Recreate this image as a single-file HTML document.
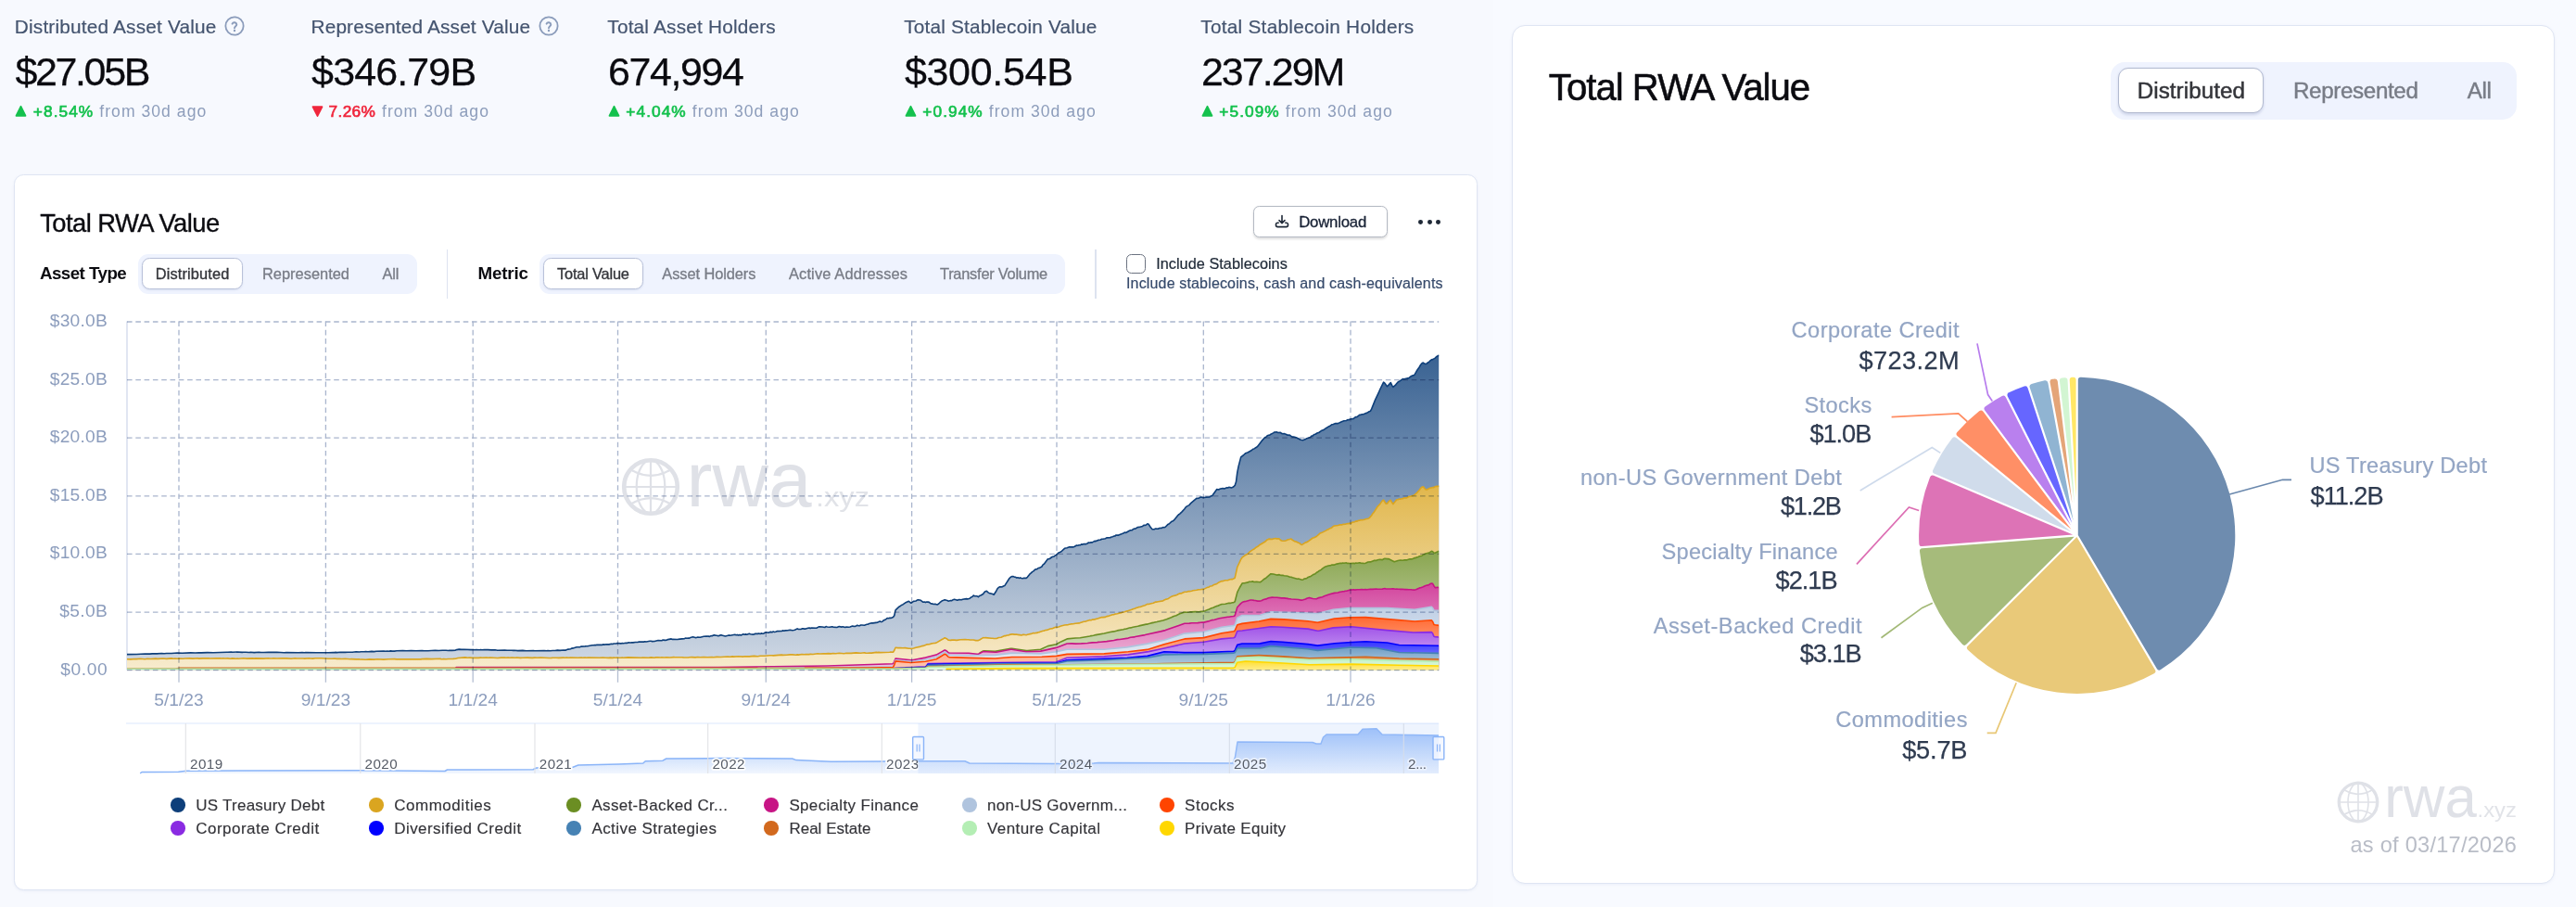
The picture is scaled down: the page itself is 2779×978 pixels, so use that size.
<!DOCTYPE html>
<html lang="en"><head><meta charset="utf-8"><title>RWA.xyz – Total RWA Value</title>
<style>
html,body{margin:0;padding:0}
body{width:2779px;height:978px;overflow:hidden;position:relative;background:#f8faff;font-family:"Liberation Sans",sans-serif}
.lbg{position:absolute;left:0;top:0;width:1611px;height:978px;background:#f7f9fe}
.t{position:absolute;white-space:nowrap;line-height:1;margin:0}
.b{position:absolute;display:block}
svg{overflow:visible}
</style></head><body>
<div class="lbg"></div>
<header aria-label="Key metrics" style="position:absolute;left:0;top:0;width:0;height:0">
<div class="t" style="left:15.80px;top:19.29px;font-size:20.8px;color:#44546f;letter-spacing:0.181px;-webkit-text-stroke:0.2px #44546f;">Distributed Asset Value</div>
<svg class="b" style="left:240.9px;top:16.2px" width="24" height="24" viewBox="0 0 24 24"><circle cx="12" cy="12" r="9.65" fill="none" stroke="#8b9cbb" stroke-width="1.8"/><path d="M9.6 9.7A2.45 2.45 0 0 1 14.3 10.5c0 1.6-2.3 1.9-2.3 3.8" fill="none" stroke="#8b9cbb" stroke-width="1.95" stroke-linecap="round"/><circle cx="12" cy="17.0" r="1.2" fill="#8b9cbb"/></svg>
<div class="t" style="left:16.40px;top:55.60px;font-size:43.0px;color:#0b0b10;letter-spacing:-2.368px;-webkit-text-stroke:0.25px #0b0b10;">$27.05B</div>
<svg class="b" style="left:16.4px;top:113.0px" width="13" height="14" viewBox="0 0 13 14"><path d="M6.5 1.6 L11.6 11.9 H1.4 Z" fill="#14c14d" stroke="#14c14d" stroke-width="1.6" stroke-linejoin="round"/></svg>
<div class="t" style="left:35.80px;top:111.96px;font-size:17.3px;color:#14c14d;letter-spacing:1.069px;-webkit-text-stroke:0.65px #14c14d;">+8.54%</div>
<div class="t" style="left:107.30px;top:111.70px;font-size:17.6px;color:#8d9dbb;letter-spacing:1.026px;">from 30d ago</div>
<div class="t" style="left:335.50px;top:19.29px;font-size:20.8px;color:#44546f;letter-spacing:0.150px;-webkit-text-stroke:0.2px #44546f;">Represented Asset Value</div>
<svg class="b" style="left:579.5px;top:16.2px" width="24" height="24" viewBox="0 0 24 24"><circle cx="12" cy="12" r="9.65" fill="none" stroke="#8b9cbb" stroke-width="1.8"/><path d="M9.6 9.7A2.45 2.45 0 0 1 14.3 10.5c0 1.6-2.3 1.9-2.3 3.8" fill="none" stroke="#8b9cbb" stroke-width="1.95" stroke-linecap="round"/><circle cx="12" cy="17.0" r="1.2" fill="#8b9cbb"/></svg>
<div class="t" style="left:336.10px;top:55.60px;font-size:43.0px;color:#0b0b10;letter-spacing:-0.874px;-webkit-text-stroke:0.25px #0b0b10;">$346.79B</div>
<svg class="b" style="left:336.1px;top:113.0px" width="13" height="14" viewBox="0 0 13 14"><path d="M6.5 12.2 L11.6 2.1 H1.4 Z" fill="#f0263c" stroke="#f0263c" stroke-width="1.6" stroke-linejoin="round"/></svg>
<div class="t" style="left:354.50px;top:111.96px;font-size:17.3px;color:#f0263c;letter-spacing:0.362px;-webkit-text-stroke:0.65px #f0263c;">7.26%</div>
<div class="t" style="left:412.00px;top:111.70px;font-size:17.6px;color:#8d9dbb;letter-spacing:1.026px;">from 30d ago</div>
<div class="t" style="left:655.30px;top:19.29px;font-size:20.8px;color:#44546f;letter-spacing:0.192px;-webkit-text-stroke:0.2px #44546f;">Total Asset Holders</div>
<div class="t" style="left:655.90px;top:55.60px;font-size:43.0px;color:#0b0b10;letter-spacing:-1.406px;-webkit-text-stroke:0.25px #0b0b10;">674,994</div>
<svg class="b" style="left:655.9px;top:113.0px" width="13" height="14" viewBox="0 0 13 14"><path d="M6.5 1.6 L11.6 11.9 H1.4 Z" fill="#14c14d" stroke="#14c14d" stroke-width="1.6" stroke-linejoin="round"/></svg>
<div class="t" style="left:675.30px;top:111.96px;font-size:17.3px;color:#14c14d;letter-spacing:1.069px;-webkit-text-stroke:0.65px #14c14d;">+4.04%</div>
<div class="t" style="left:746.80px;top:111.70px;font-size:17.6px;color:#8d9dbb;letter-spacing:1.026px;">from 30d ago</div>
<div class="t" style="left:975.30px;top:19.29px;font-size:20.8px;color:#44546f;letter-spacing:0.177px;-webkit-text-stroke:0.2px #44546f;">Total Stablecoin Value</div>
<div class="t" style="left:975.90px;top:55.60px;font-size:43.0px;color:#0b0b10;letter-spacing:-0.303px;-webkit-text-stroke:0.25px #0b0b10;">$300.54B</div>
<svg class="b" style="left:975.9px;top:113.0px" width="13" height="14" viewBox="0 0 13 14"><path d="M6.5 1.6 L11.6 11.9 H1.4 Z" fill="#14c14d" stroke="#14c14d" stroke-width="1.6" stroke-linejoin="round"/></svg>
<div class="t" style="left:995.30px;top:111.96px;font-size:17.3px;color:#14c14d;letter-spacing:1.069px;-webkit-text-stroke:0.65px #14c14d;">+0.94%</div>
<div class="t" style="left:1066.80px;top:111.70px;font-size:17.6px;color:#8d9dbb;letter-spacing:1.026px;">from 30d ago</div>
<div class="t" style="left:1295.30px;top:19.29px;font-size:20.8px;color:#44546f;letter-spacing:0.248px;-webkit-text-stroke:0.2px #44546f;">Total Stablecoin Holders</div>
<div class="t" style="left:1295.90px;top:55.60px;font-size:43.0px;color:#0b0b10;letter-spacing:-1.974px;-webkit-text-stroke:0.25px #0b0b10;">237.29M</div>
<svg class="b" style="left:1295.9px;top:113.0px" width="13" height="14" viewBox="0 0 13 14"><path d="M6.5 1.6 L11.6 11.9 H1.4 Z" fill="#14c14d" stroke="#14c14d" stroke-width="1.6" stroke-linejoin="round"/></svg>
<div class="t" style="left:1315.30px;top:111.96px;font-size:17.3px;color:#14c14d;letter-spacing:1.069px;-webkit-text-stroke:0.65px #14c14d;">+5.09%</div>
<div class="t" style="left:1386.80px;top:111.70px;font-size:17.6px;color:#8d9dbb;letter-spacing:1.026px;">from 30d ago</div>
</header>
<main style="position:absolute;left:0;top:0;width:0;height:0">
<section aria-label="Total RWA Value over time" style="position:absolute;left:0;top:0;width:0;height:0">
<div class="b" style="left:15px;top:188px;width:1579px;height:771.5px;background:#fff;border:1.4px solid #dfe5f3;border-radius:10.5px;box-sizing:border-box;box-shadow:0 1px 3px rgba(120,140,190,.10)"></div>
<div class="t" style="left:43.20px;top:226.61px;font-size:27.4px;color:#0b0b10;letter-spacing:-0.575px;-webkit-text-stroke:0.35px #0b0b10;">Total RWA Value</div>
<div class="b" style="left:1352.3px;top:222px;width:144.3px;height:33.6px;background:#fff;border:1.3px solid #b4b9c3;border-radius:6.5px;box-sizing:border-box;box-shadow:0 1.5px 2.5px rgba(0,0,0,.13)"></div>
<svg class="b" style="left:1373.8px;top:230.3px" width="18" height="18" viewBox="0 0 18 18" fill="none" stroke="#1f2937" stroke-width="1.6" stroke-linecap="round" stroke-linejoin="round"><path d="M9 2.6v7.6M6 7.6l3 3 3-3"/><path d="M5.2 10.2H4.4a1.9 1.9 0 0 0-1.9 1.9v.6a1.9 1.9 0 0 0 1.9 1.9h9.2a1.9 1.9 0 0 0 1.9-1.9v-.6a1.9 1.9 0 0 0-1.9-1.9h-.8"/></svg>
<div class="t" style="left:1401.20px;top:231.98px;font-size:16.8px;color:#182235;letter-spacing:-0.217px;-webkit-text-stroke:0.3px #182235;">Download</div>
<div class="b" style="left:1530.4px;top:237.0px;width:4.9px;height:4.9px;border-radius:50%;background:#1f2937"></div>
<div class="b" style="left:1539.7px;top:237.0px;width:4.9px;height:4.9px;border-radius:50%;background:#1f2937"></div>
<div class="b" style="left:1549.0px;top:237.0px;width:4.9px;height:4.9px;border-radius:50%;background:#1f2937"></div>
<div class="t" style="left:42.90px;top:286.09px;font-size:18.8px;color:#0b0b10;letter-spacing:-0.546px;font-weight:700;">Asset Type</div>
<div class="b" style="left:149px;top:274.3px;width:300.7px;height:42.3px;background:#eff3fe;border-radius:11px"></div>
<div class="b" style="left:153px;top:278px;width:108.8px;height:34px;background:#fff;border:1.3px solid #b9c1d9;border-radius:8.5px;box-sizing:border-box;box-shadow:0 1px 2px rgba(60,80,140,.12)"></div>
<div class="t" style="left:167.70px;top:287.12px;font-size:16.4px;color:#34353a;letter-spacing:0.141px;-webkit-text-stroke:0.33px #34353a;">Distributed</div>
<div class="t" style="left:283.00px;top:287.12px;font-size:16.4px;color:#787c86;letter-spacing:0.009px;-webkit-text-stroke:0.3px #787c86;">Represented</div>
<div class="t" style="left:412.40px;top:287.12px;font-size:16.4px;color:#787c86;letter-spacing:-0.114px;-webkit-text-stroke:0.3px #787c86;">All</div>
<div class="b" style="left:481.6px;top:269px;width:1.4px;height:52.5px;background:#dde3f0"></div>
<div class="t" style="left:515.50px;top:286.09px;font-size:18.8px;color:#0b0b10;letter-spacing:-0.175px;font-weight:700;">Metric</div>
<div class="b" style="left:582px;top:274.3px;width:566.6px;height:42.3px;background:#eff3fe;border-radius:11px"></div>
<div class="b" style="left:586px;top:278px;width:107.5px;height:34px;background:#fff;border:1.3px solid #b9c1d9;border-radius:8.5px;box-sizing:border-box;box-shadow:0 1px 2px rgba(60,80,140,.12)"></div>
<div class="t" style="left:601.00px;top:287.12px;font-size:16.4px;color:#34353a;letter-spacing:-0.193px;-webkit-text-stroke:0.33px #34353a;">Total Value</div>
<div class="t" style="left:714.30px;top:287.12px;font-size:16.4px;color:#787c86;letter-spacing:-0.074px;-webkit-text-stroke:0.3px #787c86;">Asset Holders</div>
<div class="t" style="left:851.00px;top:287.12px;font-size:16.4px;color:#787c86;letter-spacing:0.147px;-webkit-text-stroke:0.3px #787c86;">Active Addresses</div>
<div class="t" style="left:1014.00px;top:287.12px;font-size:16.4px;color:#787c86;letter-spacing:-0.244px;-webkit-text-stroke:0.3px #787c86;">Transfer Volume</div>
<div class="b" style="left:1181.4px;top:269px;width:1.4px;height:52.5px;background:#dde3f0"></div>
<div class="b" style="left:1215px;top:274px;width:21px;height:21px;background:#fff;border:1.5px solid #6b7280;border-radius:5.5px;box-sizing:border-box"></div>
<div class="t" style="left:1247.20px;top:276.20px;font-size:16.3px;color:#1f2937;letter-spacing:0.024px;-webkit-text-stroke:0.2px #1f2937;">Include Stablecoins</div>
<div class="t" style="left:1215.00px;top:298.46px;font-size:16.0px;color:#364a6b;letter-spacing:0.157px;-webkit-text-stroke:0.2px #364a6b;">Include stablecoins, cash and cash-equivalents</div>
<svg class="b" style="left:0;top:0" width="1600" height="960" viewBox="0 0 1600 960">
<defs>
<linearGradient id="g_ust" x1="0" y1="0" x2="0" y2="1"><stop offset="0" stop-color="#396292"/><stop offset="1" stop-color="#d4dce7"/></linearGradient>
<linearGradient id="g_com" x1="0" y1="0" x2="0" y2="1"><stop offset="0" stop-color="#e1b74d"/><stop offset="1" stop-color="#f8edd2"/></linearGradient>
<linearGradient id="g_abc" x1="0" y1="0" x2="0" y2="1"><stop offset="0" stop-color="#89a54f"/><stop offset="1" stop-color="#dee6cf"/></linearGradient>
<linearGradient id="g_sf" x1="0" y1="0" x2="0" y2="1"><stop offset="0" stop-color="#d2449d"/><stop offset="1" stop-color="#f3cce4"/></linearGradient>
<linearGradient id="g_non" x1="0" y1="0" x2="0" y2="1"><stop offset="0" stop-color="#c0d0e5"/><stop offset="1" stop-color="#eef2f8"/></linearGradient>
<linearGradient id="g_stk" x1="0" y1="0" x2="0" y2="1"><stop offset="0" stop-color="#ff6a33"/><stop offset="1" stop-color="#ffd6c7"/></linearGradient>
<linearGradient id="g_crp" x1="0" y1="0" x2="0" y2="1"><stop offset="0" stop-color="#a155e8"/><stop offset="1" stop-color="#e5d0f9"/></linearGradient>
<linearGradient id="g_div" x1="0" y1="0" x2="0" y2="1"><stop offset="0" stop-color="#3333ff"/><stop offset="1" stop-color="#c7c7ff"/></linearGradient>
<linearGradient id="g_act" x1="0" y1="0" x2="0" y2="1"><stop offset="0" stop-color="#6b9bc3"/><stop offset="1" stop-color="#d6e4ee"/></linearGradient>
<linearGradient id="g_re" x1="0" y1="0" x2="0" y2="1"><stop offset="0" stop-color="#db874b"/><stop offset="1" stop-color="#f5dece"/></linearGradient>
<linearGradient id="g_vc" x1="0" y1="0" x2="0" y2="1"><stop offset="0" stop-color="#c3f1c3"/><stop offset="1" stop-color="#eefbee"/></linearGradient>
<linearGradient id="g_pe" x1="0" y1="0" x2="0" y2="1"><stop offset="0" stop-color="#ffdf33"/><stop offset="1" stop-color="#fff6c7"/></linearGradient>
<linearGradient id="g_br" x1="0" y1="0" x2="0" y2="1"><stop offset="0" stop-color="#8ab4f8" stop-opacity=".85"/><stop offset="1" stop-color="#8ab4f8" stop-opacity=".12"/></linearGradient>
<clipPath id="plot"><rect x="137.0" y="340" width="1415.2" height="382.6"/></clipPath>
</defs>
<line x1="137.0" y1="346.5" x2="137.0" y2="722.6" stroke="#d5dcec" stroke-width="1.4"/>
<g fill="none" stroke="#dfe1e7" stroke-width="4.6"><circle cx="702" cy="525" r="28.8"/></g><g fill="none" stroke="#dfe1e7" stroke-width="2.2"><ellipse cx="702" cy="525" rx="15.3" ry="28.8"/><line x1="702" y1="496" x2="702" y2="554"/><line x1="673.5" y1="525" x2="730.5" y2="525"/><path d="M680.2 506.2 Q702 519.5 723.8 506.2"/><path d="M680.2 543.8 Q702 530.5 723.8 543.8"/></g>
<text x="740.6" y="546" font-family="Liberation Sans, sans-serif" font-size="83.5" fill="#dfe1e7" textLength="135" lengthAdjust="spacingAndGlyphs">rwa</text>
<text x="880" y="546" font-family="Liberation Sans, sans-serif" font-size="29.5" fill="#e1e3e8" textLength="58" lengthAdjust="spacingAndGlyphs">.xyz</text>
<g clip-path="url(#plot)" stroke-width="1.6" stroke-linejoin="round">
<path d="M131.0,705.6 L137.0,705.6 147.3,705.5 156.4,705.0 161.6,705.1 164.2,704.9 169.3,704.9 174.5,704.5 177.1,704.7 179.7,704.5 184.9,704.5 191.3,704.0 196.5,704.2 205.6,703.9 210.7,704.0 214.6,703.7 217.2,703.9 223.7,703.6 230.1,703.7 244.4,703.2 245.7,703.3 249.5,703.0 250.8,703.2 256.0,703.0 261.2,703.4 262.5,703.2 265.1,703.2 268.9,703.5 270.2,703.3 274.1,703.6 279.3,703.2 281.9,703.5 284.5,703.5 289.6,703.3 290.9,703.4 298.7,703.3 306.4,703.7 309.0,703.5 322.0,703.7 325.9,703.5 328.4,703.8 329.7,703.6 341.4,703.8 344.0,703.7 354.3,703.8 359.5,703.5 360.8,703.6 362.1,703.4 363.4,703.6 367.2,703.2 368.5,703.4 372.4,703.4 375.0,703.2 380.2,703.2 384.1,702.8 387.9,703.0 389.2,702.8 393.1,702.8 394.4,702.6 397.0,702.7 400.9,702.4 403.5,702.6 406.0,702.2 413.8,702.0 416.4,702.3 417.7,702.0 419.0,702.2 421.6,701.9 422.9,702.1 425.5,702.1 428.0,701.8 434.5,701.5 438.4,701.8 443.6,701.5 448.7,701.8 455.2,701.5 457.8,701.7 461.7,701.7 469.4,701.3 473.3,701.5 477.2,701.3 481.1,701.3 483.7,701.5 485.0,701.2 487.5,701.4 491.4,701.1 492.7,700.6 495.3,700.1 497.9,700.4 500.5,700.2 508.2,700.6 510.8,700.5 512.1,700.7 513.4,700.6 517.3,700.7 518.6,700.6 519.9,700.8 522.5,700.6 526.3,700.6 530.2,700.9 534.1,700.8 536.7,701.2 544.5,701.0 547.0,701.3 552.2,701.2 553.5,701.4 554.8,701.3 558.7,701.6 563.9,701.4 567.7,701.7 575.5,701.5 576.8,701.7 587.1,701.6 589.7,701.8 591.0,701.5 593.6,701.7 596.2,701.5 598.8,701.5 601.4,701.1 604.0,701.4 607.8,701.0 610.4,701.1 613.0,700.1 615.6,699.7 616.9,699.1 618.2,698.9 622.1,697.8 625.9,697.6 627.2,697.1 631.1,696.9 632.4,696.7 633.7,696.8 638.9,695.8 640.2,695.8 641.5,695.5 642.8,695.6 644.1,695.3 649.2,695.4 650.5,694.9 651.8,695.1 654.4,694.8 657.0,694.9 659.6,694.3 660.9,694.5 662.2,694.0 664.7,694.0 666.0,693.5 669.9,693.9 671.2,693.5 672.5,693.7 675.1,693.3 676.4,693.4 677.7,692.9 680.3,693.0 681.6,692.7 682.9,692.9 685.4,692.5 688.0,692.5 689.3,692.1 691.9,692.0 694.5,692.1 695.8,691.8 697.1,692.0 701.0,691.3 702.3,691.3 703.6,691.6 706.1,691.5 710.0,690.5 713.9,690.7 715.2,690.1 717.8,690.4 719.1,690.2 720.4,689.6 724.2,688.9 725.5,689.4 730.7,689.5 733.3,689.1 738.5,688.6 739.8,688.1 741.1,688.2 742.4,688.0 743.7,688.1 744.9,687.5 747.5,686.8 750.1,687.6 751.4,687.5 752.7,687.1 755.3,687.3 759.2,686.3 761.8,686.0 764.3,686.1 765.6,686.4 766.9,685.6 768.2,685.7 769.5,685.1 770.8,684.8 772.1,685.3 773.4,685.3 774.7,685.7 776.0,685.4 777.3,684.8 778.6,684.9 782.5,685.9 786.3,684.9 787.6,685.2 792.8,684.3 794.1,684.8 795.4,684.4 796.7,685.0 798.0,684.4 799.3,684.9 801.9,683.8 803.2,684.2 804.4,683.9 805.7,684.2 808.3,683.3 809.6,683.7 812.2,684.1 813.5,684.0 814.8,683.2 817.4,683.4 818.7,683.1 820.0,683.5 821.3,682.9 822.6,683.2 823.8,683.1 825.1,682.3 826.4,681.7 829.0,682.3 830.3,681.6 831.6,681.4 832.9,681.7 834.2,681.1 835.5,681.5 836.8,681.3 838.1,680.6 843.3,680.5 844.5,679.9 845.8,680.2 847.1,679.9 849.7,679.8 852.3,679.2 854.9,679.7 856.2,679.5 857.5,679.2 860.1,677.9 861.4,678.5 863.9,678.5 865.2,677.9 866.5,677.8 867.8,678.1 869.1,678.1 871.7,677.3 873.0,677.1 874.3,677.4 875.6,677.0 880.8,677.2 883.3,675.9 884.6,675.8 887.2,676.0 889.8,676.5 891.1,675.6 892.4,676.0 895.0,676.3 897.6,675.7 898.9,676.1 902.8,676.5 905.3,675.5 907.9,676.1 909.2,675.7 911.8,676.5 913.1,676.0 915.7,676.3 917.0,676.0 919.6,675.1 922.2,675.5 923.4,675.1 924.7,674.3 926.0,674.6 927.3,674.7 928.6,674.0 929.9,674.0 932.5,674.2 935.1,673.3 936.4,673.1 937.7,672.5 940.3,671.7 941.6,671.9 946.7,671.1 949.3,669.9 950.6,670.6 951.9,670.2 953.2,668.9 955.8,667.8 957.1,666.5 958.4,666.7 959.7,666.4 961.0,666.4 963.5,665.5 964.8,663.7 966.1,657.9 970.0,654.2 971.3,653.5 972.6,652.4 973.9,651.9 976.5,650.1 980.4,648.3 982.9,650.3 985.5,648.4 988.1,648.0 989.4,647.1 990.7,646.7 993.3,647.3 995.9,649.3 997.2,649.0 998.5,649.6 999.8,649.1 1001.1,649.1 1002.4,649.4 1003.6,650.4 1004.9,650.9 1007.5,651.5 1008.8,651.3 1010.1,651.8 1011.4,651.9 1012.7,651.0 1014.0,649.7 1016.6,647.7 1017.9,647.3 1019.2,646.7 1021.8,647.4 1023.0,648.2 1025.6,647.5 1026.9,647.6 1028.2,646.7 1029.5,646.3 1032.1,647.1 1033.4,647.1 1034.7,646.6 1037.3,646.8 1038.6,646.2 1042.5,645.6 1043.7,645.9 1046.3,645.2 1047.6,644.0 1048.9,643.5 1050.2,642.1 1051.5,642.7 1054.1,642.8 1055.4,643.7 1056.7,642.4 1058.0,642.0 1060.6,640.5 1061.9,638.7 1063.1,637.7 1064.4,637.3 1065.7,638.6 1067.0,639.4 1070.9,640.6 1072.2,641.2 1074.8,637.2 1076.1,634.7 1077.4,633.4 1078.7,632.7 1080.0,632.9 1081.3,632.7 1082.5,632.0 1083.8,631.6 1089.0,623.5 1090.3,622.3 1091.6,621.6 1092.9,621.6 1094.2,622.1 1095.5,622.3 1096.8,623.1 1098.1,622.7 1099.4,623.4 1100.7,622.9 1102.0,623.5 1103.2,623.7 1104.5,623.3 1107.1,623.4 1108.4,622.3 1111.0,618.9 1112.3,617.9 1113.6,616.6 1114.9,615.9 1116.2,614.5 1117.5,613.7 1118.8,613.7 1120.1,612.5 1121.4,612.4 1123.9,611.0 1125.2,608.9 1126.5,608.0 1130.4,602.8 1131.7,602.7 1133.0,602.0 1134.3,601.0 1135.6,600.3 1136.9,600.1 1138.2,599.0 1139.5,598.4 1142.0,596.0 1143.3,595.6 1144.6,595.0 1148.5,591.3 1151.1,590.8 1153.7,589.8 1157.6,589.9 1158.9,589.5 1161.5,588.0 1162.7,588.2 1164.0,587.8 1165.3,587.8 1166.6,586.9 1167.9,587.1 1169.2,586.6 1171.8,586.6 1173.1,586.0 1174.4,585.0 1175.7,585.3 1177.0,584.8 1178.3,584.9 1180.9,583.4 1182.1,583.6 1184.7,582.4 1187.3,582.0 1188.6,581.2 1189.9,581.2 1192.5,580.7 1193.8,579.9 1197.7,579.8 1199.0,579.0 1200.3,578.8 1201.6,578.1 1202.8,578.0 1204.1,577.0 1206.7,577.1 1209.3,575.9 1211.9,575.1 1213.2,574.1 1214.5,574.5 1218.4,572.2 1219.7,571.7 1221.0,571.8 1222.2,570.8 1223.5,570.1 1224.8,570.1 1227.4,568.5 1228.7,568.4 1232.6,567.4 1233.9,566.3 1235.2,566.4 1236.5,566.0 1237.8,564.8 1239.1,565.3 1241.6,569.1 1242.9,570.6 1244.2,570.7 1245.5,570.6 1246.8,570.0 1249.4,570.3 1250.7,569.5 1253.3,569.4 1254.6,568.6 1255.9,568.8 1257.2,568.2 1259.8,565.6 1261.1,565.0 1263.6,562.6 1264.9,562.1 1266.2,561.2 1270.1,556.4 1271.4,555.0 1272.7,554.1 1275.3,551.6 1277.9,548.8 1279.2,546.9 1280.5,545.9 1283.0,544.6 1284.3,542.9 1290.8,537.4 1293.4,537.1 1294.7,536.3 1296.0,535.9 1297.3,536.4 1299.9,536.5 1301.2,536.1 1305.0,535.9 1306.3,534.8 1307.6,534.8 1312.8,527.5 1314.1,527.9 1315.4,527.6 1316.7,527.0 1319.3,526.6 1320.6,527.0 1323.1,525.9 1324.4,526.0 1325.7,525.4 1327.0,525.5 1328.3,525.9 1329.6,525.5 1330.9,524.7 1332.2,523.4 1333.5,519.6 1334.8,509.3 1336.1,502.9 1338.7,492.9 1341.2,491.0 1343.8,488.7 1346.4,487.7 1350.3,485.5 1351.6,484.3 1352.9,483.9 1355.5,482.3 1356.8,481.2 1361.9,474.6 1364.5,471.8 1365.8,471.2 1367.1,469.9 1368.4,469.3 1369.7,469.2 1371.0,468.2 1373.6,466.9 1374.9,466.0 1377.5,465.9 1378.8,466.5 1381.3,466.4 1382.6,467.4 1383.9,467.7 1385.2,467.6 1387.8,468.5 1389.1,469.3 1390.4,469.1 1391.7,469.4 1393.0,470.5 1394.3,471.1 1395.6,471.0 1398.2,471.7 1403.3,474.3 1405.9,474.6 1408.5,473.6 1409.8,472.7 1413.7,471.4 1415.0,470.1 1416.3,469.9 1417.6,468.5 1418.9,468.3 1421.4,466.8 1422.7,466.5 1425.3,464.6 1427.9,463.6 1430.5,461.7 1433.1,460.1 1434.4,459.6 1437.0,457.7 1438.3,457.5 1440.8,456.5 1443.4,456.6 1447.3,454.7 1449.9,453.7 1452.5,453.5 1453.8,452.6 1455.1,452.7 1456.4,452.0 1460.3,451.4 1461.5,450.2 1462.8,449.6 1464.1,449.5 1465.4,448.3 1466.7,447.4 1468.0,447.3 1469.3,446.8 1470.6,446.8 1471.9,446.3 1473.2,445.6 1474.5,445.4 1477.1,443.8 1478.4,443.3 1479.7,440.9 1483.5,431.4 1487.4,423.2 1488.7,420.0 1492.6,412.2 1493.9,413.1 1496.5,416.7 1500.3,412.6 1501.6,415.4 1502.9,417.4 1505.5,415.2 1506.8,413.4 1508.1,411.9 1509.4,411.3 1513.3,408.6 1514.6,408.7 1519.8,407.6 1522.3,405.7 1523.6,405.1 1524.9,404.8 1526.2,403.9 1528.8,399.2 1531.4,395.5 1532.7,393.2 1534.0,391.7 1535.3,391.1 1536.6,392.1 1537.9,392.5 1539.2,392.1 1540.4,390.9 1541.7,390.3 1543.0,388.8 1544.3,387.9 1545.6,387.6 1548.2,386.1 1549.5,384.7 1552.1,383.2 H1558.2 V728.6 H131.0 Z" fill="url(#g_ust)" stroke="#0e3f7a"/>
<path d="M131.0,710.7 L137.0,710.7 140.9,710.9 146.1,710.5 147.3,710.6 151.2,710.3 156.4,710.7 159.0,710.3 162.9,710.5 168.0,710.1 169.3,710.4 170.6,710.4 175.8,710.0 179.7,710.4 184.9,709.9 187.4,710.2 188.7,710.1 191.3,710.2 192.6,710.0 197.8,710.2 199.1,710.0 204.3,709.9 208.1,710.1 213.3,709.8 214.6,710.1 218.5,709.9 222.4,709.9 225.0,709.7 226.3,710.0 234.0,709.7 235.3,709.9 237.9,709.8 239.2,710.0 240.5,709.8 243.1,710.0 245.7,709.9 248.2,710.2 250.8,709.9 254.7,710.2 256.0,710.0 257.3,710.2 262.5,709.8 266.4,710.1 272.8,709.9 274.1,710.1 275.4,709.9 284.5,710.1 289.6,709.8 290.9,710.0 293.5,710.0 294.8,709.9 298.7,710.0 305.2,709.7 306.4,709.9 309.0,709.9 314.2,710.3 318.1,709.8 320.7,710.0 327.1,710.0 328.4,710.1 333.6,709.8 334.9,710.0 337.5,710.1 340.1,709.8 346.5,709.7 354.3,710.2 358.2,710.2 360.8,710.0 363.4,710.4 365.9,710.2 368.5,710.5 372.4,710.3 377.6,710.7 378.9,710.6 384.1,710.9 386.6,710.7 387.9,710.9 394.4,711.2 398.3,710.9 403.5,711.1 407.3,710.8 413.8,711.1 419.0,710.7 425.5,710.6 428.0,710.9 430.6,710.7 434.5,710.9 437.1,710.7 438.4,710.9 439.7,710.7 446.1,710.9 447.4,710.7 453.9,710.9 455.2,710.6 460.4,710.4 465.5,710.6 474.6,710.3 475.9,710.6 477.2,710.7 478.5,710.5 481.1,710.7 483.7,710.5 488.8,710.4 491.4,710.2 494.0,709.5 501.8,708.9 504.4,709.3 506.9,709.1 510.8,709.4 512.1,709.2 516.0,709.4 518.6,709.1 519.9,709.3 525.0,709.1 526.3,709.3 528.9,709.0 536.7,709.5 540.6,709.1 544.5,709.0 545.7,709.2 548.3,709.1 549.6,709.3 552.2,709.0 556.1,709.2 557.4,709.0 561.3,709.4 563.9,709.2 569.0,709.1 574.2,709.4 576.8,709.1 579.4,709.2 583.3,709.0 592.3,709.5 594.9,709.4 596.2,709.2 600.1,709.2 602.7,709.4 607.8,709.1 609.1,709.3 611.7,709.0 613.0,709.2 615.6,709.0 623.4,709.2 627.2,709.0 628.5,709.2 631.1,709.1 632.4,709.3 635.0,709.0 646.6,709.2 650.5,709.0 653.1,709.3 657.0,709.4 658.3,709.1 660.9,709.4 662.2,709.1 663.5,709.3 666.0,709.1 667.3,709.3 669.9,709.3 671.2,709.1 672.5,709.2 677.7,708.9 691.9,709.3 693.2,709.1 699.7,709.2 702.3,708.9 706.1,709.2 707.4,708.9 710.0,708.8 712.6,709.0 713.9,708.8 716.5,709.0 719.1,708.8 723.0,709.0 726.8,708.6 728.1,708.8 733.3,708.8 735.9,708.7 737.2,708.9 742.4,709.0 743.7,708.7 746.2,708.6 750.1,708.9 752.7,708.5 755.3,708.8 759.2,708.5 763.1,708.8 768.2,708.5 769.5,708.7 773.4,708.4 777.3,708.5 785.0,708.0 787.6,708.3 790.2,707.9 791.5,708.1 796.7,707.8 801.9,708.1 803.2,707.7 808.3,707.9 813.5,707.4 817.4,707.7 820.0,707.3 825.1,707.3 830.3,706.8 832.9,706.7 834.2,706.9 843.3,706.1 844.5,706.4 848.4,706.3 852.3,705.9 854.9,705.9 858.8,706.2 860.1,705.9 861.4,706.1 865.2,705.5 867.8,705.8 869.1,705.6 873.0,705.6 874.3,705.3 876.9,705.5 882.1,704.8 884.6,705.0 888.5,704.7 891.1,704.9 893.7,704.6 896.3,704.9 898.9,704.5 901.5,704.8 905.3,704.3 910.5,704.7 913.1,704.3 918.3,704.4 923.4,703.9 928.6,704.2 932.5,703.8 933.8,704.1 936.4,704.3 937.7,704.0 940.3,704.1 945.4,703.4 946.7,703.6 948.0,703.4 949.3,703.6 959.7,703.3 961.0,703.1 963.5,703.2 964.8,701.2 966.1,698.2 968.7,698.6 971.3,698.5 973.9,698.8 976.5,698.6 980.4,699.2 981.7,699.2 982.9,699.5 985.5,699.0 988.1,698.2 993.3,697.1 994.6,696.6 995.9,696.4 999.8,694.9 1002.4,694.8 1004.9,693.9 1006.2,693.8 1007.5,693.5 1008.8,693.5 1010.1,693.1 1016.6,689.2 1017.9,688.7 1019.2,687.7 1021.8,689.0 1023.0,690.1 1025.6,690.4 1026.9,690.1 1029.5,690.1 1032.1,690.4 1036.0,689.8 1041.2,689.6 1043.7,689.8 1045.0,689.7 1046.3,690.0 1050.2,690.0 1052.8,690.6 1055.4,690.6 1056.7,690.0 1060.6,687.6 1061.9,687.7 1063.1,687.6 1069.6,688.3 1070.9,688.2 1072.2,688.5 1074.8,688.4 1076.1,688.1 1077.4,687.5 1080.0,687.2 1083.8,685.6 1085.1,685.6 1086.4,685.0 1087.7,685.0 1089.0,684.4 1091.6,683.9 1092.9,683.9 1094.2,684.1 1096.8,684.0 1098.1,684.4 1102.0,684.9 1103.2,684.4 1104.5,684.3 1107.1,684.7 1108.4,684.3 1112.3,683.4 1114.9,682.5 1116.2,682.8 1117.5,682.4 1118.8,682.4 1120.1,681.8 1121.4,681.6 1125.2,680.3 1126.5,680.1 1127.8,679.5 1129.1,679.4 1133.0,678.0 1135.6,677.6 1138.2,676.4 1140.8,676.3 1142.0,676.0 1144.6,675.0 1148.5,674.0 1152.4,673.6 1155.0,672.9 1157.6,672.8 1160.2,672.3 1164.0,671.9 1169.2,670.3 1170.5,670.3 1175.7,668.6 1177.0,668.8 1178.3,668.1 1180.9,667.9 1182.1,667.4 1183.4,667.2 1188.6,665.5 1189.9,665.6 1192.5,665.4 1193.8,664.6 1195.1,664.4 1200.3,662.8 1201.6,662.8 1202.8,662.1 1205.4,661.8 1208.0,661.0 1209.3,660.9 1210.6,660.2 1213.2,659.7 1214.5,659.2 1215.8,658.9 1221.0,657.3 1222.2,656.7 1224.8,656.0 1226.1,655.3 1227.4,655.1 1228.7,654.5 1230.0,654.5 1232.6,653.6 1235.2,652.7 1237.8,651.4 1239.1,651.5 1242.9,650.5 1244.2,650.3 1246.8,649.1 1248.1,649.1 1249.4,648.7 1254.6,647.9 1255.9,647.0 1257.2,646.4 1259.8,645.8 1262.3,644.1 1264.9,642.8 1266.2,642.4 1267.5,642.3 1270.1,641.2 1271.4,640.4 1272.7,639.9 1274.0,639.9 1277.9,638.2 1280.5,638.2 1281.7,637.6 1283.0,637.6 1285.6,637.2 1286.9,636.8 1290.8,636.3 1292.1,635.9 1293.4,635.7 1294.7,635.8 1297.3,635.2 1298.6,635.4 1302.4,633.4 1303.7,633.3 1305.0,632.3 1307.6,631.8 1308.9,630.8 1312.8,629.4 1315.4,627.7 1318.0,626.6 1319.3,626.6 1321.8,625.8 1324.4,625.7 1327.0,624.7 1328.3,624.6 1329.6,624.6 1332.2,623.2 1334.8,611.5 1338.7,603.1 1340.0,601.2 1343.8,598.4 1345.1,597.8 1346.4,596.9 1347.7,595.4 1351.6,592.7 1352.9,592.1 1355.5,589.9 1356.8,589.3 1359.4,587.2 1364.5,584.3 1367.1,581.9 1368.4,581.4 1369.7,581.1 1372.3,581.5 1373.6,581.0 1376.2,580.5 1377.5,581.1 1378.8,580.7 1380.1,581.1 1381.3,582.2 1382.6,583.0 1383.9,583.3 1385.2,583.3 1386.5,583.1 1387.8,582.7 1389.1,581.9 1390.4,581.8 1393.0,581.1 1394.3,582.3 1396.9,583.9 1398.2,584.0 1400.7,585.3 1402.0,585.6 1403.3,587.0 1404.6,587.4 1408.5,584.9 1409.8,584.6 1411.1,583.8 1416.3,580.0 1417.6,579.7 1420.2,578.5 1424.0,575.1 1425.3,574.6 1430.5,572.1 1431.8,571.2 1433.1,570.8 1434.4,569.8 1435.7,569.5 1437.0,568.7 1438.3,567.5 1439.6,567.0 1443.4,566.5 1446.0,565.7 1447.3,565.9 1448.6,565.4 1451.2,565.3 1453.8,564.6 1455.1,564.6 1456.4,564.1 1457.7,564.1 1459.0,563.1 1461.5,562.7 1462.8,561.9 1464.1,562.1 1465.4,561.3 1466.7,561.2 1468.0,560.6 1469.3,560.8 1471.9,560.3 1473.2,559.8 1475.8,559.3 1477.1,558.6 1479.7,555.8 1480.9,553.7 1482.2,552.4 1486.1,546.2 1488.7,543.6 1491.3,539.9 1492.6,539.2 1495.2,543.3 1496.5,543.0 1497.8,541.1 1499.1,540.0 1500.3,539.3 1501.6,541.8 1502.9,543.6 1506.8,538.8 1508.1,538.7 1509.4,538.1 1510.7,538.3 1512.0,537.7 1513.3,537.7 1514.6,536.9 1517.2,537.0 1519.8,535.5 1522.3,535.1 1523.6,534.5 1524.9,534.4 1526.2,533.5 1528.8,531.1 1531.4,528.2 1532.7,526.3 1534.0,525.2 1535.3,524.9 1537.9,527.8 1539.2,528.0 1543.0,526.1 1544.3,526.0 1545.6,525.6 1546.9,525.6 1548.2,524.7 1549.5,524.4 1550.8,524.5 1552.1,524.1 H1558.2 V728.6 H131.0 Z" fill="url(#g_com)" stroke="#daa520"/>
<path d="M131.0,721.0 L137.0,721.0 190.0,721.0 193.9,720.3 490.1,720.3 492.7,719.5 495.3,719.5 773.4,719.6 893.7,718.0 963.5,715.6 964.8,713.3 966.1,710.1 982.9,711.7 984.2,711.7 998.5,709.1 1010.1,706.1 1019.2,700.9 1020.5,701.4 1023.0,703.7 1024.3,704.0 1045.0,704.3 1054.1,705.1 1055.4,705.1 1060.6,702.0 1061.9,701.8 1073.5,702.4 1090.3,699.3 1091.6,699.3 1107.1,701.5 1108.4,701.5 1122.6,700.3 1130.4,696.6 1139.5,694.7 1144.6,691.9 1151.1,688.9 1160.2,688.0 1165.3,687.7 1175.7,686.0 1177.0,685.6 1179.6,685.3 1184.7,684.1 1187.3,683.8 1197.7,681.5 1201.6,680.9 1205.4,679.9 1211.9,678.8 1213.2,678.3 1214.5,678.2 1218.4,677.0 1219.7,676.9 1223.5,675.9 1224.8,675.8 1227.4,675.3 1228.7,674.9 1236.5,673.1 1237.8,673.1 1241.6,671.9 1244.2,671.4 1245.5,671.0 1248.1,670.5 1254.6,669.0 1261.1,666.9 1266.2,664.5 1268.8,663.8 1272.7,661.8 1276.6,660.4 1277.9,660.1 1280.5,660.2 1283.0,660.0 1284.3,659.7 1285.6,659.9 1286.9,659.7 1293.4,659.7 1296.0,659.3 1297.3,659.4 1299.9,658.8 1302.4,657.6 1303.7,657.3 1307.6,655.6 1308.9,655.2 1310.2,654.5 1312.8,653.4 1314.1,653.2 1315.4,652.5 1318.0,651.5 1321.8,651.2 1325.7,650.2 1327.0,650.4 1329.6,649.7 1330.9,649.6 1332.2,648.8 1334.8,638.6 1337.4,633.5 1340.0,629.1 1341.2,628.7 1342.5,628.7 1346.4,627.9 1347.7,627.2 1350.3,627.1 1351.6,626.9 1352.9,627.5 1355.5,627.2 1359.4,627.7 1360.7,627.0 1363.2,624.8 1365.8,623.2 1371.0,618.7 1373.6,619.0 1377.5,620.1 1380.1,619.6 1381.3,620.2 1382.6,620.4 1383.9,620.2 1385.2,620.7 1387.8,621.0 1389.1,621.3 1391.7,622.2 1393.0,622.2 1394.3,622.8 1399.5,624.3 1400.7,624.1 1404.6,625.3 1405.9,624.9 1407.2,624.0 1408.5,623.9 1409.8,623.4 1411.1,622.5 1412.4,621.9 1413.7,621.7 1416.3,619.8 1418.9,618.7 1420.2,617.5 1421.4,616.8 1422.7,615.8 1425.3,614.4 1426.6,613.2 1429.2,611.3 1433.1,610.0 1435.7,609.6 1437.0,609.1 1439.6,609.1 1442.1,608.1 1446.0,607.3 1447.3,607.4 1448.6,607.0 1449.9,607.3 1451.2,607.0 1452.5,606.9 1453.8,607.4 1456.4,607.5 1460.3,607.3 1461.5,607.6 1462.8,607.1 1464.1,607.2 1466.7,606.8 1468.0,607.1 1471.9,607.5 1473.2,607.2 1475.8,606.0 1478.4,605.9 1482.2,604.4 1483.5,604.2 1484.8,604.4 1486.1,603.8 1488.7,603.3 1491.3,603.6 1492.6,602.8 1493.9,602.3 1496.5,602.6 1497.8,602.5 1504.2,605.7 1508.1,604.5 1510.7,604.0 1513.3,604.3 1514.6,603.9 1517.2,603.9 1521.0,602.7 1522.3,602.9 1523.6,602.7 1526.2,601.6 1527.5,601.4 1528.8,600.8 1530.1,600.5 1531.4,599.8 1534.0,599.2 1535.3,598.2 1536.6,597.8 1537.9,597.0 1541.7,596.1 1544.3,594.3 1545.6,594.8 1546.9,596.0 1548.2,596.4 1549.5,595.5 1550.8,595.0 1552.1,594.1 H1558.2 V728.6 H131.0 Z" fill="url(#g_abc)"/>
<path d="M1056.7,704.3 L1056.7,704.3 1060.6,702.0 1061.9,701.8 1073.5,702.4 1090.3,699.3 1091.6,699.3 1107.1,701.5 1108.4,701.5 1122.6,700.3 1130.4,696.6 1139.5,694.7 1144.6,691.9 1151.1,688.9 1160.2,688.0 1165.3,687.7 1175.7,686.0 1177.0,685.6 1179.6,685.3 1182.1,684.6 1191.2,683.0 1197.7,681.5 1201.6,680.9 1205.4,679.9 1211.9,678.8 1213.2,678.3 1214.5,678.2 1218.4,677.0 1219.7,676.9 1222.2,676.2 1227.4,675.3 1228.7,674.9 1236.5,673.1 1237.8,673.1 1241.6,671.9 1244.2,671.4 1245.5,671.0 1248.1,670.5 1254.6,669.0 1258.5,667.8 1263.6,665.8 1266.2,664.5 1268.8,663.8 1272.7,661.8 1276.6,660.4 1277.9,660.1 1280.5,660.2 1283.0,660.0 1284.3,659.7 1285.6,659.9 1289.5,659.6 1293.4,659.7 1296.0,659.3 1297.3,659.4 1299.9,658.8 1302.4,657.6 1303.7,657.3 1307.6,655.6 1308.9,655.2 1310.2,654.5 1312.8,653.4 1314.1,653.2 1315.4,652.5 1318.0,651.5 1321.8,651.2 1325.7,650.2 1327.0,650.4 1329.6,649.7 1330.9,649.6 1332.2,648.8 1334.8,638.6 1337.4,633.5 1340.0,629.1 1341.2,628.7 1342.5,628.7 1346.4,627.9 1347.7,627.2 1350.3,627.1 1351.6,626.9 1352.9,627.5 1355.5,627.2 1359.4,627.7 1360.7,627.0 1363.2,624.8 1365.8,623.2 1371.0,618.7 1373.6,619.0 1377.5,620.1 1380.1,619.6 1381.3,620.2 1382.6,620.4 1383.9,620.2 1385.2,620.7 1387.8,621.0 1389.1,621.3 1391.7,622.2 1393.0,622.2 1394.3,622.8 1399.5,624.3 1400.7,624.1 1404.6,625.3 1405.9,624.9 1407.2,624.0 1408.5,623.9 1409.8,623.4 1411.1,622.5 1412.4,621.9 1413.7,621.7 1416.3,619.8 1418.9,618.7 1420.2,617.5 1421.4,616.8 1422.7,615.8 1425.3,614.4 1426.6,613.2 1429.2,611.3 1433.1,610.0 1435.7,609.6 1437.0,609.1 1439.6,609.1 1442.1,608.1 1446.0,607.3 1447.3,607.4 1448.6,607.0 1449.9,607.3 1451.2,607.0 1452.5,606.9 1453.8,607.4 1456.4,607.5 1460.3,607.3 1461.5,607.6 1462.8,607.1 1464.1,607.2 1466.7,606.8 1468.0,607.1 1471.9,607.5 1473.2,607.2 1475.8,606.0 1478.4,605.9 1482.2,604.4 1483.5,604.2 1484.8,604.4 1486.1,603.8 1488.7,603.3 1491.3,603.6 1492.6,602.8 1493.9,602.3 1496.5,602.6 1497.8,602.5 1504.2,605.7 1508.1,604.5 1510.7,604.0 1513.3,604.3 1514.6,603.9 1517.2,603.9 1521.0,602.7 1522.3,602.9 1523.6,602.7 1526.2,601.6 1527.5,601.4 1528.8,600.8 1530.1,600.5 1531.4,599.8 1534.0,599.2 1535.3,598.2 1536.6,597.8 1537.9,597.0 1541.7,596.1 1544.3,594.3 1545.6,594.8 1546.9,596.0 1548.2,596.4 1549.5,595.5 1550.8,595.0 1552.1,594.1" fill="none" stroke="#6b8e23"/>
<path d="M131.0,721.0 L137.0,721.0 190.0,721.0 193.9,720.3 490.1,720.3 492.7,719.5 495.3,719.5 774.7,719.6 892.4,718.0 963.5,715.7 964.8,713.3 966.1,710.1 982.9,711.7 984.2,711.7 998.5,709.1 1010.1,706.1 1019.2,700.9 1020.5,701.4 1023.0,703.7 1024.3,704.0 1045.0,704.3 1054.1,705.2 1055.4,705.2 1060.6,702.6 1064.4,702.7 1073.5,703.3 1074.8,703.2 1090.3,700.2 1091.6,700.3 1107.1,702.7 1122.6,702.1 1139.5,698.4 1151.1,694.0 1156.3,693.9 1160.2,694.1 1166.6,693.9 1173.1,693.5 1178.3,692.9 1183.4,692.7 1184.7,692.4 1187.3,692.3 1193.8,691.6 1201.6,690.5 1205.4,689.6 1208.0,689.5 1217.1,688.1 1219.7,687.3 1223.5,686.9 1224.8,686.5 1233.9,684.9 1236.5,684.2 1252.0,680.9 1257.2,679.6 1277.9,672.3 1283.0,672.1 1285.6,671.8 1292.1,671.6 1297.3,671.0 1298.6,671.1 1303.7,669.9 1307.6,668.6 1310.2,668.2 1315.4,666.8 1324.4,665.2 1325.7,665.2 1328.3,664.7 1330.9,664.5 1332.2,663.7 1334.8,654.7 1338.7,650.6 1340.0,649.6 1342.5,648.6 1343.8,648.5 1349.0,647.0 1350.3,647.0 1352.9,647.4 1354.2,647.5 1356.8,648.1 1359.4,648.1 1360.7,647.7 1363.2,646.5 1365.8,645.9 1368.4,644.8 1372.3,644.1 1374.9,644.3 1377.5,644.3 1382.6,644.9 1385.2,644.9 1389.1,645.4 1390.4,645.7 1391.7,645.7 1393.0,646.0 1400.7,646.5 1403.3,647.1 1404.6,647.1 1405.9,646.8 1408.5,646.0 1409.8,645.2 1412.4,644.4 1416.3,645.5 1420.2,645.7 1422.7,644.6 1426.6,643.8 1427.9,643.1 1434.4,640.7 1439.6,639.4 1443.4,639.0 1444.7,638.5 1448.6,637.7 1449.9,637.7 1451.2,637.2 1452.5,637.2 1455.1,636.4 1460.3,635.7 1461.5,636.1 1464.1,635.7 1466.7,635.8 1469.3,635.6 1470.6,635.8 1473.2,635.5 1474.5,635.8 1478.4,635.2 1480.9,635.4 1484.8,635.0 1486.1,635.2 1491.3,635.1 1492.6,634.8 1493.9,634.6 1495.2,635.0 1500.3,635.0 1502.9,634.8 1505.5,635.3 1506.8,635.1 1508.1,635.3 1509.4,635.2 1510.7,635.4 1512.0,635.3 1515.9,635.6 1517.2,635.5 1519.8,635.8 1522.3,635.7 1523.6,636.0 1526.2,636.1 1527.5,635.7 1531.4,633.9 1532.7,633.7 1535.3,632.8 1537.9,631.5 1540.4,630.9 1541.7,630.4 1543.0,629.5 1544.3,629.1 1545.6,629.4 1546.9,631.7 1548.2,633.6 1549.5,633.6 1550.8,633.2 1552.1,633.5 H1558.2 V728.6 H131.0 Z" fill="url(#g_sf)"/>
<path d="M491.4,719.8 L491.4,719.8 492.7,719.5 501.8,719.5 774.7,719.6 892.4,718.0 963.5,715.7 964.8,713.3 966.1,710.1 982.9,711.7 984.2,711.7 998.5,709.1 1010.1,706.1 1019.2,700.9 1020.5,701.4 1023.0,703.7 1024.3,704.0 1045.0,704.3 1054.1,705.2 1055.4,705.2 1060.6,702.6 1064.4,702.7 1073.5,703.3 1074.8,703.2 1090.3,700.2 1091.6,700.3 1107.1,702.7 1122.6,702.1 1139.5,698.4 1151.1,694.0 1156.3,693.9 1160.2,694.1 1166.6,693.9 1173.1,693.5 1178.3,692.9 1183.4,692.7 1184.7,692.4 1187.3,692.3 1193.8,691.6 1201.6,690.5 1205.4,689.6 1208.0,689.5 1217.1,688.1 1219.7,687.3 1223.5,686.9 1224.8,686.5 1233.9,684.9 1236.5,684.2 1252.0,680.9 1257.2,679.6 1277.9,672.3 1283.0,672.1 1285.6,671.8 1292.1,671.6 1297.3,671.0 1298.6,671.1 1303.7,669.9 1307.6,668.6 1310.2,668.2 1315.4,666.8 1324.4,665.2 1325.7,665.2 1328.3,664.7 1330.9,664.5 1332.2,663.7 1334.8,654.7 1338.7,650.6 1340.0,649.6 1342.5,648.6 1343.8,648.5 1349.0,647.0 1350.3,647.0 1352.9,647.4 1354.2,647.5 1356.8,648.1 1359.4,648.1 1360.7,647.7 1363.2,646.5 1365.8,645.9 1368.4,644.8 1372.3,644.1 1374.9,644.3 1377.5,644.3 1382.6,644.9 1385.2,644.9 1389.1,645.4 1390.4,645.7 1391.7,645.7 1393.0,646.0 1400.7,646.5 1403.3,647.1 1404.6,647.1 1405.9,646.8 1408.5,646.0 1409.8,645.2 1412.4,644.4 1416.3,645.5 1420.2,645.7 1422.7,644.6 1426.6,643.8 1427.9,643.1 1434.4,640.7 1439.6,639.4 1443.4,639.0 1444.7,638.5 1448.6,637.7 1449.9,637.7 1451.2,637.2 1452.5,637.2 1455.1,636.4 1460.3,635.7 1461.5,636.1 1464.1,635.7 1466.7,635.8 1469.3,635.6 1470.6,635.8 1473.2,635.5 1474.5,635.8 1478.4,635.2 1480.9,635.4 1484.8,635.0 1486.1,635.2 1491.3,635.1 1492.6,634.8 1493.9,634.6 1495.2,635.0 1500.3,635.0 1502.9,634.8 1505.5,635.3 1506.8,635.1 1508.1,635.3 1509.4,635.2 1510.7,635.4 1512.0,635.3 1515.9,635.6 1517.2,635.5 1519.8,635.8 1522.3,635.7 1523.6,636.0 1526.2,636.1 1527.5,635.7 1531.4,633.9 1532.7,633.7 1535.3,632.8 1537.9,631.5 1540.4,630.9 1541.7,630.4 1543.0,629.5 1544.3,629.1 1545.6,629.4 1546.9,631.7 1548.2,633.6 1549.5,633.6 1550.8,633.2 1552.1,633.5" fill="none" stroke="#c71585"/>
<path d="M131.0,721.0 L137.0,721.0 190.0,721.0 193.9,720.3 799.3,720.4 939.0,719.2 963.5,718.8 964.8,715.8 966.1,711.7 982.9,713.3 984.2,713.3 998.5,711.3 1010.1,708.5 1019.2,703.2 1020.5,703.7 1023.0,706.1 1024.3,706.3 1046.3,706.8 1073.5,706.4 1091.6,704.1 1122.6,704.9 1139.5,702.8 1151.1,700.3 1191.2,700.3 1217.1,697.8 1237.8,694.1 1255.9,690.2 1277.9,683.1 1298.6,681.3 1318.0,676.3 1330.9,674.5 1332.2,673.8 1334.8,666.1 1340.0,663.5 1358.1,663.5 1359.4,663.3 1371.0,659.8 1372.3,659.7 1411.1,661.0 1421.4,661.5 1438.3,657.3 1456.4,655.6 1496.5,655.5 1526.2,657.4 1544.3,654.3 1545.6,655.5 1546.9,658.2 1548.2,658.4 1552.1,658.4 H1558.2 V728.6 H131.0 Z" fill="url(#g_non)"/>
<path d="M817.4,720.2 L817.4,720.2 939.0,719.2 963.5,718.8 964.8,715.8 966.1,711.7 982.9,713.3 984.2,713.3 998.5,711.3 1010.1,708.5 1019.2,703.2 1020.5,703.7 1023.0,706.1 1024.3,706.3 1046.3,706.8 1073.5,706.4 1091.6,704.1 1122.6,704.9 1139.5,702.8 1151.1,700.3 1191.2,700.3 1215.8,697.9 1237.8,694.1 1255.9,690.2 1277.9,683.1 1298.6,681.3 1318.0,676.3 1330.9,674.5 1332.2,673.8 1334.8,666.1 1340.0,663.5 1358.1,663.5 1359.4,663.3 1371.0,659.8 1372.3,659.7 1411.1,661.0 1421.4,661.5 1438.3,657.3 1456.4,655.6 1496.5,655.5 1526.2,657.4 1544.3,654.3 1545.6,655.5 1546.9,658.2 1548.2,658.4 1552.1,658.4" fill="none" stroke="#b0c4de"/>
<path d="M131.0,721.0 L137.0,721.0 190.0,721.0 193.9,720.3 773.4,720.3 843.3,720.5 939.0,720.0 963.5,719.6 964.8,716.8 966.1,712.9 982.9,714.5 998.5,713.3 1010.1,710.8 1019.2,705.2 1020.5,705.8 1023.0,708.3 1024.3,708.6 1046.3,709.4 1073.5,710.0 1091.6,708.5 1123.9,708.3 1139.5,707.4 1151.1,705.4 1191.2,704.9 1217.1,702.8 1237.8,700.4 1255.9,694.7 1277.9,688.9 1298.6,687.6 1318.0,682.7 1330.9,680.7 1332.2,680.0 1334.8,673.7 1340.0,672.4 1358.1,670.0 1371.0,667.4 1385.2,667.9 1411.1,669.8 1421.4,671.2 1439.6,667.0 1456.4,665.7 1473.2,665.6 1526.2,670.0 1544.3,668.8 1545.6,670.3 1546.9,673.4 1548.2,673.8 1552.1,674.4 H1558.2 V728.6 H131.0 Z" fill="url(#g_stk)"/>
<path d="M867.8,720.4 L867.8,720.4 939.0,720.0 963.5,719.6 964.8,716.8 966.1,712.9 982.9,714.5 998.5,713.3 1010.1,710.8 1019.2,705.2 1020.5,705.8 1023.0,708.3 1024.3,708.6 1046.3,709.4 1073.5,710.0 1091.6,708.5 1123.9,708.3 1139.5,707.4 1151.1,705.4 1191.2,704.9 1217.1,702.8 1237.8,700.4 1255.9,694.7 1277.9,688.9 1298.6,687.6 1318.0,682.7 1330.9,680.7 1332.2,680.0 1334.8,673.7 1340.0,672.4 1358.1,670.0 1371.0,667.4 1385.2,667.9 1411.1,669.8 1421.4,671.2 1439.6,667.0 1456.4,665.7 1473.2,665.6 1526.2,670.0 1544.3,668.8 1545.6,670.3 1546.9,673.4 1548.2,673.8 1552.1,674.4" fill="none" stroke="#ff4500"/>
<path d="M131.0,721.0 L137.0,721.0 190.0,721.0 193.9,720.3 773.4,720.3 884.6,720.6 964.8,720.4 998.5,719.0 999.8,717.6 1001.1,715.6 1090.3,714.2 1139.5,713.7 1151.1,709.2 1191.2,707.9 1217.1,705.9 1239.1,702.6 1255.9,699.0 1277.9,694.0 1298.6,692.2 1318.0,688.9 1330.9,687.7 1332.2,687.1 1334.8,680.5 1340.0,680.0 1371.0,675.8 1383.9,676.2 1411.1,678.1 1421.4,680.3 1422.7,680.2 1438.3,676.9 1457.7,675.7 1496.5,679.6 1524.9,682.0 1544.3,681.6 1545.6,683.1 1546.9,686.3 1548.2,686.6 1552.1,687.0 H1558.2 V728.6 H131.0 Z" fill="url(#g_crp)"/>
<path d="M976.5,719.9 L976.5,719.9 998.5,719.0 999.8,717.6 1001.1,715.6 1090.3,714.2 1139.5,713.7 1151.1,709.2 1191.2,707.9 1217.1,705.9 1239.1,702.6 1255.9,699.0 1277.9,694.0 1298.6,692.2 1318.0,688.9 1330.9,687.7 1332.2,687.1 1334.8,680.5 1340.0,680.0 1371.0,675.8 1383.9,676.2 1411.1,678.1 1421.4,680.3 1422.7,680.2 1438.3,676.9 1457.7,675.7 1496.5,679.6 1524.9,682.0 1544.3,681.6 1545.6,683.1 1546.9,686.3 1548.2,686.6 1552.1,687.0" fill="none" stroke="#8a2be2"/>
<path d="M131.0,721.0 L137.0,721.0 190.0,721.0 193.9,720.3 773.4,720.3 895.0,720.7 964.8,720.5 998.5,719.4 999.8,718.0 1001.1,716.2 1090.3,715.0 1139.5,715.0 1151.1,711.7 1191.2,710.4 1215.8,709.2 1237.8,707.4 1255.9,702.8 1277.9,703.6 1298.6,703.6 1330.9,702.2 1332.2,701.6 1334.8,695.2 1340.0,694.0 1359.4,693.9 1371.0,691.5 1383.9,692.2 1411.1,694.6 1421.4,696.1 1439.6,693.7 1457.7,692.5 1473.2,691.8 1496.5,693.0 1509.4,695.5 1552.1,696.2 H1558.2 V728.6 H131.0 Z" fill="url(#g_div)"/>
<path d="M964.8,720.5 L964.8,720.5 998.5,719.4 999.8,718.0 1001.1,716.2 1090.3,715.0 1139.5,715.0 1151.1,711.7 1191.2,710.4 1215.8,709.2 1237.8,707.4 1255.9,702.8 1277.9,703.6 1298.6,703.6 1330.9,702.2 1332.2,701.6 1334.8,695.2 1340.0,694.0 1359.4,693.9 1371.0,691.5 1383.9,692.2 1411.1,694.6 1421.4,696.1 1439.6,693.7 1457.7,692.5 1473.2,691.8 1496.5,693.0 1509.4,695.5 1552.1,696.2" fill="none" stroke="#0000ff"/>
<path d="M131.0,721.0 L137.0,721.0 190.0,721.0 193.9,720.3 773.4,720.3 922.2,720.8 964.8,720.7 998.5,719.8 999.8,718.8 1001.1,717.4 1090.3,715.5 1139.5,715.5 1151.1,713.0 1191.2,711.7 1237.8,709.2 1255.9,705.9 1298.6,705.4 1330.9,704.1 1332.2,703.7 1334.8,699.0 1358.1,699.0 1359.4,698.9 1371.0,696.6 1411.1,699.7 1421.4,701.4 1456.4,698.0 1484.8,698.6 1509.4,703.5 1552.1,704.4 H1558.2 V728.6 H131.0 Z" fill="url(#g_act)"/>
<path d="M964.8,720.7 L964.8,720.7 998.5,719.8 999.8,718.8 1001.1,717.4 1090.3,715.5 1139.5,715.5 1151.1,713.0 1191.2,711.7 1237.8,709.2 1255.9,705.9 1298.6,705.4 1330.9,704.1 1332.2,703.7 1334.8,699.0 1358.1,699.0 1359.4,698.9 1371.0,696.6 1411.1,699.7 1421.4,701.4 1456.4,698.0 1484.8,698.6 1509.4,703.5 1552.1,704.4" fill="none" stroke="#4682b4"/>
<path d="M131.0,721.0 L137.0,721.0 190.0,721.0 193.9,720.3 773.4,720.3 964.8,720.9 998.5,720.2 1001.1,718.8 1090.3,716.8 1151.1,716.8 1237.8,716.0 1255.9,715.5 1330.9,714.2 1332.2,713.7 1334.8,707.9 1358.1,706.6 1383.9,707.9 1412.4,709.9 1473.2,708.3 1509.4,710.0 1552.1,710.7 H1558.2 V728.6 H131.0 Z" fill="url(#g_re)" stroke="#d2691e"/>
<path d="M131.0,721.2 L137.0,721.2 250.8,721.4 964.8,721.2 998.5,720.5 1001.1,719.4 1090.3,717.6 1330.9,715.5 1332.2,715.0 1334.8,709.2 1358.1,708.4 1412.4,711.2 1457.7,710.7 1509.4,712.4 1552.1,713.2 H1558.2 V728.6 H131.0 Z" fill="url(#g_vc)" stroke="#b4eeb4"/>
<path d="M131.0,725.0 L137.0,725.0 1017.9,725.0 1019.2,724.6 1020.5,721.3 1021.8,721.2 1091.6,720.6 1330.9,720.1 1332.2,719.7 1334.8,714.2 1343.8,713.0 1383.9,715.0 1412.4,716.8 1457.7,716.1 1509.4,717.3 1552.1,718.0 H1558.2 V728.6 H131.0 Z" fill="url(#g_pe)"/>
<path d="M1020.5,721.3 L1020.5,721.3 1091.6,720.6 1330.9,720.1 1332.2,719.7 1334.8,714.2 1343.8,713.0 1383.9,715.0 1412.4,716.8 1457.7,716.1 1509.4,717.3 1552.1,718.0" fill="none" stroke="#ffd700"/>
</g>
<g stroke="#a9b5cd" stroke-width="1.3" stroke-dasharray="5.6 3.7" style="mix-blend-mode:multiply">
<line x1="137.0" y1="347.0" x2="1552.2" y2="347.0"/>
<line x1="137.0" y1="409.6" x2="1552.2" y2="409.6"/>
<line x1="137.0" y1="472.2" x2="1552.2" y2="472.2"/>
<line x1="137.0" y1="534.8" x2="1552.2" y2="534.8"/>
<line x1="137.0" y1="597.4" x2="1552.2" y2="597.4"/>
<line x1="137.0" y1="660.1" x2="1552.2" y2="660.1"/>
<line x1="137.0" y1="722.7" x2="1552.2" y2="722.7"/>
<line x1="193.0" y1="346.5" x2="193.0" y2="722.6"/>
<line x1="351.4" y1="346.5" x2="351.4" y2="722.6"/>
<line x1="510.2" y1="346.5" x2="510.2" y2="722.6"/>
<line x1="666.5" y1="346.5" x2="666.5" y2="722.6"/>
<line x1="826.3" y1="346.5" x2="826.3" y2="722.6"/>
<line x1="983.6" y1="346.5" x2="983.6" y2="722.6"/>
<line x1="1140.0" y1="346.5" x2="1140.0" y2="722.6"/>
<line x1="1298.3" y1="346.5" x2="1298.3" y2="722.6"/>
<line x1="1457.0" y1="346.5" x2="1457.0" y2="722.6"/>
</g>
<g stroke="#b4bed2" stroke-width="1.3">
<line x1="193.0" y1="722.9" x2="193.0" y2="735.8000000000001"/>
<line x1="351.4" y1="722.9" x2="351.4" y2="735.8000000000001"/>
<line x1="510.2" y1="722.9" x2="510.2" y2="735.8000000000001"/>
<line x1="666.5" y1="722.9" x2="666.5" y2="735.8000000000001"/>
<line x1="826.3" y1="722.9" x2="826.3" y2="735.8000000000001"/>
<line x1="983.6" y1="722.9" x2="983.6" y2="735.8000000000001"/>
<line x1="1140.0" y1="722.9" x2="1140.0" y2="735.8000000000001"/>
<line x1="1298.3" y1="722.9" x2="1298.3" y2="735.8000000000001"/>
<line x1="1457.0" y1="722.9" x2="1457.0" y2="735.8000000000001"/>
</g>
</svg>
<div class="t" style="left:53.80px;top:335.95px;font-size:19.2px;color:#8c9dbd;letter-spacing:0.229px;">$30.0B</div>
<div class="t" style="left:53.80px;top:398.55px;font-size:19.2px;color:#8c9dbd;letter-spacing:0.229px;">$25.0B</div>
<div class="t" style="left:53.80px;top:461.15px;font-size:19.2px;color:#8c9dbd;letter-spacing:0.229px;">$20.0B</div>
<div class="t" style="left:53.80px;top:523.75px;font-size:19.2px;color:#8c9dbd;letter-spacing:0.229px;">$15.0B</div>
<div class="t" style="left:53.80px;top:586.35px;font-size:19.2px;color:#8c9dbd;letter-spacing:0.229px;">$10.0B</div>
<div class="t" style="left:64.30px;top:649.05px;font-size:19.2px;color:#8c9dbd;letter-spacing:0.331px;">$5.0B</div>
<div class="t" style="left:65.30px;top:711.65px;font-size:19.2px;color:#8c9dbd;letter-spacing:0.613px;">$0.00</div>
<div class="t" style="left:166.25px;top:744.75px;font-size:19.2px;color:#8c9dbd;letter-spacing:0.024px;">5/1/23</div>
<div class="t" style="left:324.65px;top:744.75px;font-size:19.2px;color:#8c9dbd;letter-spacing:0.024px;">9/1/23</div>
<div class="t" style="left:483.45px;top:744.75px;font-size:19.2px;color:#8c9dbd;letter-spacing:0.024px;">1/1/24</div>
<div class="t" style="left:639.75px;top:744.75px;font-size:19.2px;color:#8c9dbd;letter-spacing:0.024px;">5/1/24</div>
<div class="t" style="left:799.55px;top:744.75px;font-size:19.2px;color:#8c9dbd;letter-spacing:0.024px;">9/1/24</div>
<div class="t" style="left:956.85px;top:744.75px;font-size:19.2px;color:#8c9dbd;letter-spacing:0.024px;">1/1/25</div>
<div class="t" style="left:1113.25px;top:744.75px;font-size:19.2px;color:#8c9dbd;letter-spacing:0.024px;">5/1/25</div>
<div class="t" style="left:1271.55px;top:744.75px;font-size:19.2px;color:#8c9dbd;letter-spacing:0.024px;">9/1/25</div>
<div class="t" style="left:1430.25px;top:744.75px;font-size:19.2px;color:#8c9dbd;letter-spacing:0.024px;">1/1/26</div>
<svg class="b" style="left:0;top:760px" width="1600" height="90" viewBox="0 760 1600 90">
<line x1="136" y1="780" x2="1552.2" y2="780" stroke="#dbe7fd" stroke-width="1.2"/>
<path d="M151.2,833.8 L153,832.5 L192.5,832.2 L201,831.2 L390,830.8 L480,831.5 L482.5,830 L575,829.8 L578.8,828 L617.5,827.5 L623.8,825 L667.5,824 L693.8,823 L696.2,820.8 L715,820.2 L718.8,818 L774,817.6 L854.7,818 L859,819.6 L896.7,821.2 L996.5,820.8 L1041,820.8 L1046,823 L1138,823.5 L1180,823 L1185,822.5 L1330,823 L1332.5,816.2 L1335,800 L1416,800.5 L1420,802 L1425,802 L1427.5,795 L1431,792 L1465,792 L1470,786.2 L1485,785.8 L1491,792 L1520,792.5 L1552,793 L1552,834 L151.2,834 Z" fill="url(#g_br)"/>
<path d="M151.2,833.8 L153,832.5 L192.5,832.2 L201,831.2 L390,830.8 L480,831.5 L482.5,830 L575,829.8 L578.8,828 L617.5,827.5 L623.8,825 L667.5,824 L693.8,823 L696.2,820.8 L715,820.2 L718.8,818 L774,817.6 L854.7,818 L859,819.6 L896.7,821.2 L996.5,820.8 L1041,820.8 L1046,823 L1138,823.5 L1180,823 L1185,822.5 L1330,823 L1332.5,816.2 L1335,800 L1416,800.5 L1420,802 L1425,802 L1427.5,795 L1431,792 L1465,792 L1470,786.2 L1485,785.8 L1491,792 L1520,792.5 L1552,793" fill="none" stroke="#8ab4f8" stroke-width="1.5" stroke-linejoin="round"/>
<line x1="200.3" y1="780" x2="200.3" y2="834" stroke="#e1e2e6" stroke-width="1.1"/>
<line x1="388.8" y1="780" x2="388.8" y2="834" stroke="#e1e2e6" stroke-width="1.1"/>
<line x1="577.0" y1="780" x2="577.0" y2="834" stroke="#e1e2e6" stroke-width="1.1"/>
<line x1="763.7" y1="780" x2="763.7" y2="834" stroke="#e1e2e6" stroke-width="1.1"/>
<line x1="951.3" y1="780" x2="951.3" y2="834" stroke="#e1e2e6" stroke-width="1.1"/>
<line x1="1138.3" y1="780" x2="1138.3" y2="834" stroke="#e1e2e6" stroke-width="1.1"/>
<line x1="1326.3" y1="780" x2="1326.3" y2="834" stroke="#e1e2e6" stroke-width="1.1"/>
<line x1="1514.3" y1="780" x2="1514.3" y2="834" stroke="#e1e2e6" stroke-width="1.1"/>
<rect x="990.4" y="780" width="561.8" height="54" fill="#a9c7fb" fill-opacity=".20"/>
<clipPath id="c23"><rect x="940" y="800" width="50.4" height="40"/></clipPath>
<text x="205.10000000000002" y="829.0" font-family="Liberation Sans, sans-serif" font-size="15.2" fill="#555b66" stroke="#ffffff" stroke-width="3.4" stroke-linejoin="round" paint-order="stroke" textLength="35.0" lengthAdjust="spacing">2019</text>
<text x="393.6" y="829.0" font-family="Liberation Sans, sans-serif" font-size="15.2" fill="#555b66" stroke="#ffffff" stroke-width="3.4" stroke-linejoin="round" paint-order="stroke" textLength="35.0" lengthAdjust="spacing">2020</text>
<text x="581.8" y="829.0" font-family="Liberation Sans, sans-serif" font-size="15.2" fill="#555b66" stroke="#ffffff" stroke-width="3.4" stroke-linejoin="round" paint-order="stroke" textLength="35.0" lengthAdjust="spacing">2021</text>
<text x="768.5" y="829.0" font-family="Liberation Sans, sans-serif" font-size="15.2" fill="#555b66" stroke="#ffffff" stroke-width="3.4" stroke-linejoin="round" paint-order="stroke" textLength="35.0" lengthAdjust="spacing">2022</text>
<text clip-path="url(#c23)" x="956.0999999999999" y="829.0" font-family="Liberation Sans, sans-serif" font-size="15.2" fill="#555b66" stroke="#ffffff" stroke-width="3.4" stroke-linejoin="round" paint-order="stroke" textLength="35.0" lengthAdjust="spacing">2023</text>
<text x="1143.1" y="829.0" font-family="Liberation Sans, sans-serif" font-size="15.2" fill="#555b66" stroke="#eaf1fe" stroke-width="3.4" stroke-linejoin="round" paint-order="stroke" textLength="35.0" lengthAdjust="spacing">2024</text>
<text x="1331.1" y="829.0" font-family="Liberation Sans, sans-serif" font-size="15.2" fill="#555b66" stroke="#eaf1fe" stroke-width="3.4" stroke-linejoin="round" paint-order="stroke" textLength="35.0" lengthAdjust="spacing">2025</text>
<text x="1519.1" y="829.0" font-family="Liberation Sans, sans-serif" font-size="15.2" fill="#555b66" stroke="#eaf1fe" stroke-width="3.4" stroke-linejoin="round" paint-order="stroke" textLength="20" lengthAdjust="spacing">2...</text>
<rect x="984.7" y="794.5" width="11.8" height="24.4" rx="1" fill="#f3f7ff" fill-opacity=".85" stroke="#8ab4f8" stroke-width="1.4"/>
<path d="M989.2 802.6v8M992.0 802.6v8" stroke="#8ab4f8" stroke-width="1.2"/>
<rect x="1546.0" y="794.5" width="11.8" height="24.4" rx="1" fill="#f3f7ff" fill-opacity=".85" stroke="#8ab4f8" stroke-width="1.4"/>
<path d="M1550.5 802.6v8M1553.3 802.6v8" stroke="#8ab4f8" stroke-width="1.2"/>
</svg>
<div class="b" style="left:184.2px;top:860.2px;width:15.6px;height:15.6px;border-radius:50%;background:#0e3f7a"></div>
<div class="t" style="left:211.20px;top:859.71px;font-size:17.0px;color:#333338;letter-spacing:0.260px;-webkit-text-stroke:0.15px #333338;">US Treasury Debt</div>
<div class="b" style="left:398.2px;top:860.2px;width:15.6px;height:15.6px;border-radius:50%;background:#daa520"></div>
<div class="t" style="left:425.20px;top:859.71px;font-size:17.0px;color:#333338;letter-spacing:0.530px;-webkit-text-stroke:0.15px #333338;">Commodities</div>
<div class="b" style="left:611.4px;top:860.2px;width:15.6px;height:15.6px;border-radius:50%;background:#6b8e23"></div>
<div class="t" style="left:638.40px;top:859.71px;font-size:17.0px;color:#333338;letter-spacing:0.337px;-webkit-text-stroke:0.15px #333338;">Asset-Backed Cr...</div>
<div class="b" style="left:824.4px;top:860.2px;width:15.6px;height:15.6px;border-radius:50%;background:#c71585"></div>
<div class="t" style="left:851.40px;top:859.71px;font-size:17.0px;color:#333338;letter-spacing:0.332px;-webkit-text-stroke:0.15px #333338;">Specialty Finance</div>
<div class="b" style="left:1038.0px;top:860.2px;width:15.6px;height:15.6px;border-radius:50%;background:#b0c4de"></div>
<div class="t" style="left:1065.00px;top:859.71px;font-size:17.0px;color:#333338;letter-spacing:0.285px;-webkit-text-stroke:0.15px #333338;">non-US Governm...</div>
<div class="b" style="left:1251.1px;top:860.2px;width:15.6px;height:15.6px;border-radius:50%;background:#ff4500"></div>
<div class="t" style="left:1278.10px;top:859.71px;font-size:17.0px;color:#333338;letter-spacing:0.497px;-webkit-text-stroke:0.15px #333338;">Stocks</div>
<div class="b" style="left:184.2px;top:885.2px;width:15.6px;height:15.6px;border-radius:50%;background:#8a2be2"></div>
<div class="t" style="left:211.20px;top:884.71px;font-size:17.0px;color:#333338;letter-spacing:0.489px;-webkit-text-stroke:0.15px #333338;">Corporate Credit</div>
<div class="b" style="left:398.2px;top:885.2px;width:15.6px;height:15.6px;border-radius:50%;background:#0000ff"></div>
<div class="t" style="left:425.20px;top:884.71px;font-size:17.0px;color:#333338;letter-spacing:0.445px;-webkit-text-stroke:0.15px #333338;">Diversified Credit</div>
<div class="b" style="left:611.4px;top:885.2px;width:15.6px;height:15.6px;border-radius:50%;background:#4682b4"></div>
<div class="t" style="left:638.40px;top:884.71px;font-size:17.0px;color:#333338;letter-spacing:0.434px;-webkit-text-stroke:0.15px #333338;">Active Strategies</div>
<div class="b" style="left:824.4px;top:885.2px;width:15.6px;height:15.6px;border-radius:50%;background:#d2691e"></div>
<div class="t" style="left:851.40px;top:884.71px;font-size:17.0px;color:#333338;letter-spacing:0.012px;-webkit-text-stroke:0.15px #333338;">Real Estate</div>
<div class="b" style="left:1038.0px;top:885.2px;width:15.6px;height:15.6px;border-radius:50%;background:#b4eeb4"></div>
<div class="t" style="left:1065.00px;top:884.71px;font-size:17.0px;color:#333338;letter-spacing:0.411px;-webkit-text-stroke:0.15px #333338;">Venture Capital</div>
<div class="b" style="left:1251.1px;top:885.2px;width:15.6px;height:15.6px;border-radius:50%;background:#ffd700"></div>
<div class="t" style="left:1278.10px;top:884.71px;font-size:17.0px;color:#333338;letter-spacing:0.317px;-webkit-text-stroke:0.15px #333338;">Private Equity</div>
</section>
<section aria-label="Total RWA Value by asset class" style="position:absolute;left:0;top:0;width:0;height:0">
<div class="b" style="left:1631.3px;top:27px;width:1125.0px;height:925.5px;background:#fff;border:1.4px solid #dfe5f3;border-radius:14px;box-sizing:border-box;box-shadow:0 1px 3px rgba(120,140,190,.10)"></div>
<div class="t" style="left:1670.80px;top:75.27px;font-size:40.2px;color:#0b0b10;letter-spacing:-0.996px;-webkit-text-stroke:0.55px #0b0b10;">Total RWA Value</div>
<div class="b" style="left:2277.3px;top:67.3px;width:438px;height:61.7px;background:#eff3fe;border-radius:15px"></div>
<div class="b" style="left:2285px;top:73px;width:157px;height:48.7px;background:#fff;border:1.6px solid #b2bad0;border-radius:11px;box-sizing:border-box;box-shadow:0 1.5px 3px rgba(60,80,140,.18)"></div>
<div class="t" style="left:2305.70px;top:86.21px;font-size:24.2px;color:#34353a;letter-spacing:0.063px;-webkit-text-stroke:0.5px #34353a;">Distributed</div>
<div class="t" style="left:2474.00px;top:86.21px;font-size:24.2px;color:#787c86;letter-spacing:-0.358px;-webkit-text-stroke:0.45px #787c86;">Represented</div>
<div class="t" style="left:2661.80px;top:86.21px;font-size:24.2px;color:#787c86;letter-spacing:-0.348px;-webkit-text-stroke:0.45px #787c86;">All</div>
<svg class="b" style="left:1640px;top:300px" width="1110" height="650" viewBox="1640 300 1110 650">
<g style="filter:blur(.5px)">
<path d="M2241.80,577.00 L2241.80,409.75 A3.0,3.0 0 0 1 2244.87,406.75 A170.6,170.6 0 0 1 2330.98,722.05 A3.0,3.0 0 0 1 2326.81,721.03 Z" fill="#6e8caf"/>
<path d="M2240.47,579.08 L2324.92,722.15 A3.0,3.0 0 0 1 2323.79,726.30 A170.6,170.6 0 0 1 2122.90,700.70 A3.0,3.0 0 0 1 2122.86,696.41 Z" fill="#e9c979"/>
<path d="M2237.81,578.63 L2121.30,694.85 A3.0,3.0 0 0 1 2117.01,694.79 A170.6,170.6 0 0 1 2070.97,594.55 A3.0,3.0 0 0 1 2073.73,591.25 Z" fill="#a6bb7b"/>
<path d="M2236.12,576.55 L2073.56,589.06 A3.0,3.0 0 0 1 2070.33,586.22 A170.6,170.6 0 0 1 2082.08,514.50 A3.0,3.0 0 0 1 2086.04,512.85 Z" fill="#dd73b6"/>
<path d="M2234.06,573.29 L2086.90,510.82 A3.0,3.0 0 0 1 2085.34,506.82 A170.6,170.6 0 0 1 2106.08,472.51 A3.0,3.0 0 0 1 2110.35,472.03 Z" fill="#d0dceb"/>
<path d="M2234.41,570.73 L2111.74,470.33 A3.0,3.0 0 0 1 2111.37,466.05 A170.6,170.6 0 0 1 2135.20,443.24 A3.0,3.0 0 0 1 2139.45,443.80 Z" fill="#ff8f66"/>
<path d="M2233.97,566.47 L2141.21,442.48 A3.0,3.0 0 0 1 2141.88,438.24 A170.6,170.6 0 0 1 2159.82,427.09 A3.0,3.0 0 0 1 2163.91,428.38 Z" fill="#b980ee"/>
<path d="M2235.21,564.05 L2165.88,427.38 A3.0,3.0 0 0 1 2167.26,423.32 A170.6,170.6 0 0 1 2183.75,416.49 A3.0,3.0 0 0 1 2187.60,418.38 Z" fill="#6666ff"/>
<path d="M2236.67,561.42 L2189.69,417.70 A3.0,3.0 0 0 1 2191.68,413.89 A170.6,170.6 0 0 1 2205.81,410.31 A3.0,3.0 0 0 1 2209.37,412.70 Z" fill="#90b4d2"/>
<path d="M2235.46,542.67 L2211.54,412.30 A3.0,3.0 0 0 1 2214.02,408.80 A170.6,170.6 0 0 1 2216.36,408.44 A3.0,3.0 0 0 1 2219.77,411.06 Z" fill="#e4a578"/>
<path d="M2237.76,543.35 L2221.95,410.80 A3.0,3.0 0 0 1 2224.65,407.46 A170.6,170.6 0 0 1 2227.31,407.23 A3.0,3.0 0 0 1 2230.54,410.05 Z" fill="#d2f5d2"/>
<path d="M2239.60,536.65 L2232.74,409.94 A3.0,3.0 0 0 1 2235.64,406.77 A170.6,170.6 0 0 1 2236.53,406.75 A3.0,3.0 0 0 1 2239.60,409.75 Z" fill="#ffe766"/>
</g>
<polyline points="2405.3,533 2462.5,517.3 2472.0,517.3" fill="none" stroke="#0e3f7a" stroke-opacity=".62" stroke-width="1.7"/>
<polyline points="2175.2,736.2 2153.0,790.3 2143.7,790.3" fill="none" stroke="#daa520" stroke-opacity=".62" stroke-width="1.7"/>
<polyline points="2084.8,650.3 2073.7,655.4 2029.5,687.7" fill="none" stroke="#6b8e23" stroke-opacity=".62" stroke-width="1.7"/>
<polyline points="2070.2,550.5 2059.4,547.0 2003.0,608.3" fill="none" stroke="#c71585" stroke-opacity=".62" stroke-width="1.7"/>
<polyline points="2093.3,488.4 2084.3,482.6 2006.7,528.9" fill="none" stroke="#b0c4de" stroke-opacity=".62" stroke-width="1.7"/>
<polyline points="2122.3,454.5 2112.7,445.8 2040.6,449.6" fill="none" stroke="#ff4500" stroke-opacity=".62" stroke-width="1.7"/>
<polyline points="2149.3,432.5 2144.6,425.6 2133,370.3" fill="none" stroke="#8a2be2" stroke-opacity=".62" stroke-width="1.7"/>
</svg>
<div class="t" style="left:1932.60px;top:345.42px;font-size:23.6px;color:#93a5c4;letter-spacing:0.436px;-webkit-text-stroke:0.2px #93a5c4;">Corporate Credit</div>
<div class="t" style="left:2005.60px;top:374.88px;font-size:27.2px;color:#2f3b50;letter-spacing:0.358px;-webkit-text-stroke:0.25px #2f3b50;">$723.2M</div>
<div class="t" style="left:1946.40px;top:425.62px;font-size:23.6px;color:#93a5c4;letter-spacing:0.435px;-webkit-text-stroke:0.2px #93a5c4;">Stocks</div>
<div class="t" style="left:1952.40px;top:453.88px;font-size:27.2px;color:#2f3b50;letter-spacing:-1.021px;-webkit-text-stroke:0.25px #2f3b50;">$1.0B</div>
<div class="t" style="left:1705.00px;top:504.02px;font-size:23.6px;color:#93a5c4;letter-spacing:0.436px;-webkit-text-stroke:0.2px #93a5c4;">non-US Government Debt</div>
<div class="t" style="left:1921.00px;top:532.48px;font-size:27.2px;color:#2f3b50;letter-spacing:-1.271px;-webkit-text-stroke:0.25px #2f3b50;">$1.2B</div>
<div class="t" style="left:1792.60px;top:584.02px;font-size:23.6px;color:#93a5c4;letter-spacing:0.232px;-webkit-text-stroke:0.2px #93a5c4;">Specialty Finance</div>
<div class="t" style="left:1915.60px;top:612.28px;font-size:27.2px;color:#2f3b50;letter-spacing:-1.021px;-webkit-text-stroke:0.25px #2f3b50;">$2.1B</div>
<div class="t" style="left:1783.70px;top:663.82px;font-size:23.6px;color:#93a5c4;letter-spacing:0.549px;-webkit-text-stroke:0.2px #93a5c4;">Asset-Backed Credit</div>
<div class="t" style="left:1941.70px;top:691.28px;font-size:27.2px;color:#2f3b50;letter-spacing:-1.021px;-webkit-text-stroke:0.25px #2f3b50;">$3.1B</div>
<div class="t" style="left:1980.20px;top:765.42px;font-size:23.6px;color:#93a5c4;letter-spacing:0.459px;-webkit-text-stroke:0.2px #93a5c4;">Commodities</div>
<div class="t" style="left:2052.20px;top:795.48px;font-size:27.2px;color:#2f3b50;letter-spacing:-0.196px;-webkit-text-stroke:0.25px #2f3b50;">$5.7B</div>
<div class="t" style="left:2491.40px;top:491.22px;font-size:23.6px;color:#93a5c4;letter-spacing:0.269px;-webkit-text-stroke:0.2px #93a5c4;">US Treasury Debt</div>
<div class="t" style="left:2492.60px;top:521.28px;font-size:27.2px;color:#2f3b50;letter-spacing:-1.038px;-webkit-text-stroke:0.25px #2f3b50;">$11.2B</div>
<svg class="b" style="left:2500px;top:830px" width="240" height="110" viewBox="2500 830 240 110"><g fill="none" stroke="#dfe1e7" stroke-width="3.4"><circle cx="2544" cy="865" r="20.7"/></g><g fill="none" stroke="#dfe1e7" stroke-width="1.6"><ellipse cx="2544" cy="865" rx="11" ry="20.7"/><line x1="2544" y1="844" x2="2544" y2="886"/><line x1="2523" y1="865" x2="2565" y2="865"/><path d="M2528.3 851.5 Q2544 861 2559.7 851.5"/><path d="M2528.3 878.5 Q2544 869 2559.7 878.5"/></g><text x="2572.3" y="880.5" font-family="Liberation Sans, sans-serif" font-size="63.5" fill="#dfe1e7" textLength="99.5" lengthAdjust="spacingAndGlyphs">rwa</text><text x="2672.5" y="880.5" font-family="Liberation Sans, sans-serif" font-size="22.6" fill="#e1e3e8" textLength="42.5" lengthAdjust="spacingAndGlyphs">.xyz</text></svg>
<div class="t" style="left:2535.50px;top:899.62px;font-size:23.6px;color:#b9bdc7;letter-spacing:0.244px;">as of 03/17/2026</div>
</section>
</main>
</body></html>
